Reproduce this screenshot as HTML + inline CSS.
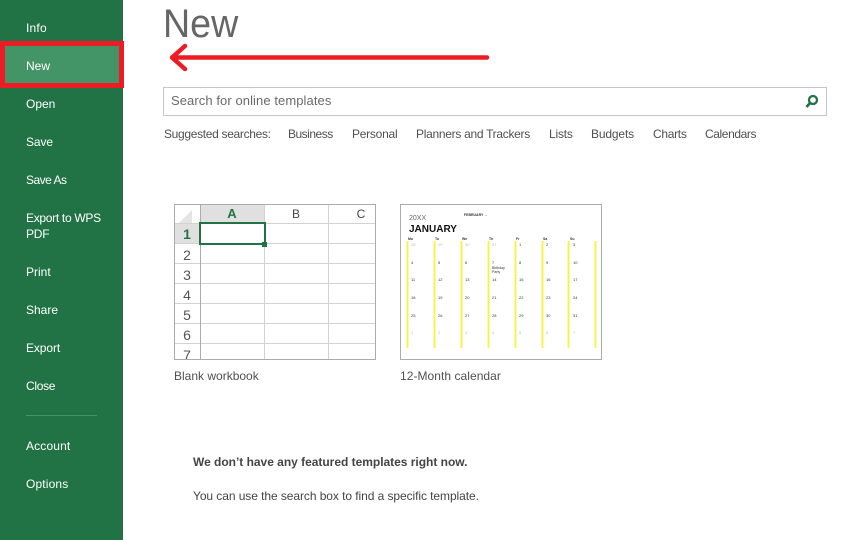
<!DOCTYPE html>
<html><head><meta charset="utf-8">
<style>
html,body{margin:0;padding:0;background:#fff}
body{width:847px;height:540px;position:relative;overflow:hidden;font-family:"Liberation Sans",sans-serif;font-size:12px;color:#505050}
.t{position:absolute;white-space:nowrap;line-height:16px}
.n{color:#fff;left:26px}
.l{position:absolute}
</style></head><body>
<div class="l" style="left:0;top:0;width:123px;height:540px;background:#217346"></div>
<div class="l" style="left:0;top:41px;width:124px;height:47px;box-sizing:border-box;border:5px solid #ed1c24;background:#439467"></div>
<div class="l" style="left:26px;top:415px;width:71px;height:1px;background:#439467"></div>
<span class="t n" style="top:20px;letter-spacing:.2px">Info</span>
<span class="t n" style="top:58px">New</span>
<span class="t n" style="top:96px">Open</span>
<span class="t n" style="top:134px;letter-spacing:-.1px">Save</span>
<span class="t n" style="top:172px;letter-spacing:-.5px">Save As</span>
<span class="t n" style="top:210px;letter-spacing:-.3px">Export to WPS</span>
<span class="t n" style="top:226px;letter-spacing:-.2px">PDF</span>
<span class="t n" style="top:264px">Print</span>
<span class="t n" style="top:302px">Share</span>
<span class="t n" style="top:340px;letter-spacing:-.1px">Export</span>
<span class="t n" style="top:378px;letter-spacing:-.3px">Close</span>
<span class="t n" style="top:438px;letter-spacing:.15px">Account</span>
<span class="t n" style="top:476px;letter-spacing:.15px">Options</span>

<span class="t" style="left:163px;top:0;font-size:40px;line-height:48px;color:#666;transform:scaleX(.94);transform-origin:0 0">New</span>
<svg class="l" style="left:165px;top:40px" width="330" height="34" viewBox="0 0 330 34"><path d="M322 17.500H8M20 6L7 17.500L20 29" fill="none" stroke="#ed1c24" stroke-width="4.500" stroke-linecap="round" stroke-linejoin="round"/></svg>

<div class="l" style="left:163px;top:87px;width:664px;height:29px;box-sizing:border-box;border:1px solid #c6c6c6"></div>
<span class="t" style="left:171px;top:93px;font-size:13px;color:#6a6a6a;letter-spacing:.08px">Search for online templates</span>
<svg class="l" style="left:804px;top:93px" width="16" height="16" viewBox="0 0 16 16"><circle cx="9" cy="7" r="4" fill="none" stroke="#217346" stroke-width="2.300"/><path d="M6 10L2.500 14" stroke="#217346" stroke-width="2.600"/></svg>

<span class="t" style="left:164px;top:126px;letter-spacing:-.32px">Suggested searches:</span>
<span class="t" style="left:288px;top:126px;letter-spacing:-.5px">Business</span>
<span class="t" style="left:352px;top:126px;letter-spacing:-.25px">Personal</span>
<span class="t" style="left:416px;top:126px;letter-spacing:-.29px">Planners and Trackers</span>
<span class="t" style="left:549px;top:126px;letter-spacing:-.2px">Lists</span>
<span class="t" style="left:591px;top:126px;letter-spacing:-.15px">Budgets</span>
<span class="t" style="left:653px;top:126px;letter-spacing:-.3px">Charts</span>
<span class="t" style="left:705px;top:126px;letter-spacing:-.4px">Calendars</span>

<svg class="l" style="left:174px;top:204px" width="203" height="157" viewBox="0 0 203 157" font-family="Liberation Sans, sans-serif" font-size="14" text-anchor="middle">
<defs><clipPath id="c"><rect x="1" y="1" width="200" height="154"/></clipPath></defs>
<rect x="26" y="1" width="65" height="18" fill="#e0e0e0"/>
<rect x="1" y="19" width="25" height="21" fill="#e0e0e0"/>
<path d="M18 6V20H4Z" fill="#e4e4e4"/>
<path d="M1 19.5H201M1 39.5H201M1 59.5H201M1 79.5H201M1 99.5H201M1 119.5H201M1 139.5H201M90.500 1V155M154.500 1V155" stroke="#d2d2d2" fill="none"/>
<path d="M26.500 1V155" stroke="#ababab"/>
<rect x=".5" y=".5" width="201" height="155" fill="none" stroke="#ababab"/>
<rect x="26" y="19" width="65" height="21" fill="none" stroke="#217346" stroke-width="2"/>
<rect x="88" y="38" width="5" height="5" fill="#217346"/>
<g clip-path="url(#c)" fill="#555">
<text x="58" y="14" fill="#217346" font-weight="bold" font-size="13">A</text>
<text x="122" y="14" font-size="12" fill="#444">B</text>
<text x="187" y="14" font-size="12" fill="#444">C</text>
<text x="13" y="35" fill="#217346" font-weight="bold">1</text>
<text x="13" y="56">2</text><text x="13" y="76">3</text><text x="13" y="96">4</text><text x="13" y="116">5</text><text x="13" y="136">6</text><text x="13" y="156">7</text>
</g></svg>
<span class="t" style="left:174px;top:368px">Blank workbook</span>

<svg class="l" style="left:400px;top:204px" width="203" height="157" viewBox="0 0 203 157" font-family="Liberation Sans, sans-serif" font-size="4" fill="#333">
<rect x=".5" y=".5" width="201" height="155" fill="#fff" stroke="#ababab"/>
<text x="9" y="16" font-size="7" fill="#666">20XX</text>
<text x="64" y="12" font-size="3.500" font-weight="bold">FEBRUARY →</text>
<text x="9" y="28" font-size="10" font-weight="bold" fill="#111">JANUARY</text>
<g stroke="#fbf03a" stroke-width="1.800"><path d="M7.500 37V144M34.500 37V144M61.500 37V144M88.500 37V144M115.500 37V144M142.500 37V144M168.500 37V144M195.500 37V144"/></g>
<g font-weight="bold" font-size="3.500"><text x="8" y="36">Mo</text><text x="35" y="36">Tu</text><text x="62" y="36">We</text><text x="89" y="36">Th</text><text x="116" y="36">Fr</text><text x="143" y="36">Sa</text><text x="170" y="36">Su</text></g>
<g fill="#bbb"><text x="11" y="42">28</text><text x="38" y="42">29</text><text x="65" y="42">30</text><text x="92" y="42">31</text></g>
<text x="119" y="42">1</text><text x="146" y="42">2</text><text x="173" y="42">3</text>
<text x="11" y="60">4</text><text x="38" y="60">5</text><text x="65" y="60">6</text><text x="92" y="60">7</text><text x="119" y="60">8</text><text x="146" y="60">9</text><text x="173" y="60">10</text>
<text x="92" y="65" font-size="3.500">Birthday</text><text x="92" y="69" font-size="3.500">Party</text>
<text x="11" y="77">11</text><text x="38" y="77">12</text><text x="65" y="77">13</text><text x="92" y="77">14</text><text x="119" y="77">15</text><text x="146" y="77">16</text><text x="173" y="77">17</text>
<text x="11" y="95">18</text><text x="38" y="95">19</text><text x="65" y="95">20</text><text x="92" y="95">21</text><text x="119" y="95">22</text><text x="146" y="95">23</text><text x="173" y="95">24</text>
<text x="11" y="113">25</text><text x="38" y="113">26</text><text x="65" y="113">27</text><text x="92" y="113">28</text><text x="119" y="113">29</text><text x="146" y="113">30</text><text x="173" y="113">31</text>
<g fill="#bbb"><text x="11" y="130">1</text><text x="38" y="130">2</text><text x="65" y="130">3</text><text x="92" y="130">4</text><text x="119" y="130">5</text><text x="146" y="130">6</text><text x="173" y="130">7</text></g>
</svg>
<span class="t" style="left:400px;top:368px;letter-spacing:.05px">12-Month calendar</span>

<span class="t" style="left:193px;top:454px;font-weight:bold;color:#444;letter-spacing:-.02px">We don’t have any featured templates right now.</span>
<span class="t" style="left:193px;top:488px;color:#444;letter-spacing:-.07px">You can use the search box to find a specific template.</span>
</body></html>
